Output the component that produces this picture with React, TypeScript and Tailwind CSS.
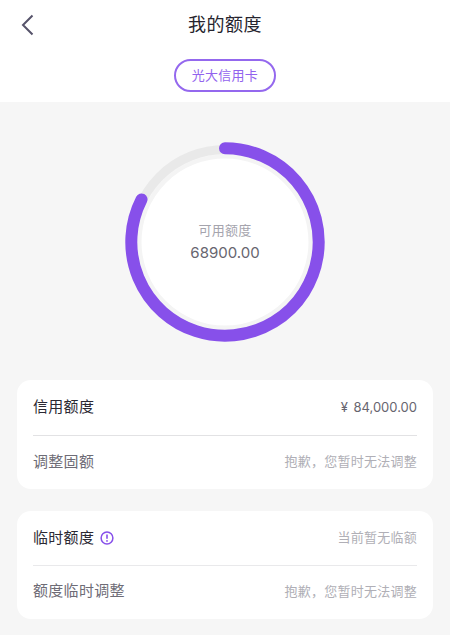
import React from 'react';

const font = { fontFamily: 'Inter, "Noto Sans CJK SC", sans-serif' };

// Linha de um cartão de limite
const Row = ({ children, value, rowClass, valueClass }: { children: React.ReactNode; value: string; rowClass: string; valueClass: string }) => (
  <div className={`flex items-center justify-between ${rowClass}`}>
    {children}
    <span className={`text-[13px] tracking-[0.25px] ${valueClass}`}>{value}</span>
  </div>
);

const Ring = () => {
  const cx = 110;
  const cy = 110;
  const r = 93.7;
  const toX = (a: number) => cx + r * Math.sin((a * Math.PI) / 180);
  const toY = (a: number) => cy - r * Math.cos((a * Math.PI) / 180);
  const start = 0;
  const end = -63;
  return (
    <div className="relative w-[220px] h-[220px]">
      <svg width="220" height="220" viewBox="0 0 220 220" className="block">
        <circle cx={cx} cy={cy} r="85.5" fill="#ffffff" stroke="#f4f4f4" strokeWidth="4" />
        <circle cx={cx} cy={cy} r="92.5" fill="none" stroke="#e9e9e9" strokeWidth="9" />
        <path
          d={`M ${toX(start)} ${toY(start)} A ${r} ${r} 0 1 1 ${toX(end)} ${toY(end)}`}
          fill="none"
          stroke="#8750ea"
          strokeWidth="12"
          strokeLinecap="round"
        />
      </svg>
      <div className="absolute inset-0 flex flex-col items-center justify-center">
        <span className="text-[13px] leading-[18px] text-[#a5a4ad] tracking-[0.25px] mt-[1px]">可用额度</span>
        <span className="text-[15px] leading-[22px] text-[#67656f] mt-[3px]">68900.00</span>
      </div>
    </div>
  );
};

export default function App() {
  return (
    <div className="w-[450px] h-[635px] overflow-hidden bg-[#f6f6f6]" style={font}>
      <div className="bg-white h-[102px]">
        <div className="relative flex items-center justify-center h-[49px]">
          <svg width="14" height="22" viewBox="0 0 14 22" className="absolute left-[21px] top-[14px]">
            <path d="M11.5 1.5 L2 11 L11.5 20.5" fill="none" stroke="#56536a" strokeWidth="2" />
          </svg>
          <span className="text-[18px] tracking-[0.5px] text-[#26242e]">我的额度</span>
        </div>
        <div className="flex justify-center mt-[10px]">
          <div className="flex items-center justify-center w-[102px] h-[33px] rounded-full border-2 border-[#9468ee] text-[13px] tracking-[0.25px] text-[#9263ee]">
            光大信用卡
          </div>
        </div>
      </div>

      <div className="flex justify-center pt-[29.5px] h-[278px]">
        <Ring />
      </div>

      <div className="flex flex-col gap-[22px] px-[17px]">
        <div className="bg-white rounded-[14px] px-[16px] h-[109px]">
          <Row rowClass="h-[55px]" value="¥ 84,000.00" valueClass="text-[#67656f] [word-spacing:2px] tracking-normal">
            <span className="text-[15px] tracking-[0.3px] text-[#2b2933]">信用额度</span>
          </Row>
          <div className="h-px bg-[#e2e2e4]" />
          <Row rowClass="h-[52px]" value="抱歉，您暂时无法调整" valueClass="text-[#b0afb6]">
            <span className="text-[15px] tracking-[0.3px] text-[#6e6c76]">调整固额</span>
          </Row>
        </div>

        <div className="bg-white rounded-[14px] px-[16px] h-[108px]">
          <Row rowClass="h-[54px]" value="当前暂无临额" valueClass="text-[#b0afb6]">
            <span className="flex items-center gap-[6px] text-[15px] tracking-[0.3px] text-[#2b2933]">
              临时额度
              <svg width="14" height="14" viewBox="0 0 14 14">
                <circle cx="7" cy="7" r="5.9" fill="none" stroke="#8750ea" strokeWidth="1.5" />
                <path d="M7 3.6 V7.8" stroke="#8750ea" strokeWidth="1.6" />
                <circle cx="7" cy="9.9" r="0.9" fill="#8750ea" />
              </svg>
            </span>
          </Row>
          <div className="h-px bg-[#e9e9eb]" />
          <Row rowClass="h-[51px]" value="抱歉，您暂时无法调整" valueClass="text-[#b0afb6]">
            <span className="text-[15px] tracking-[0.3px] text-[#6e6c76]">额度临时调整</span>
          </Row>
        </div>
      </div>
    </div>
  );
}
